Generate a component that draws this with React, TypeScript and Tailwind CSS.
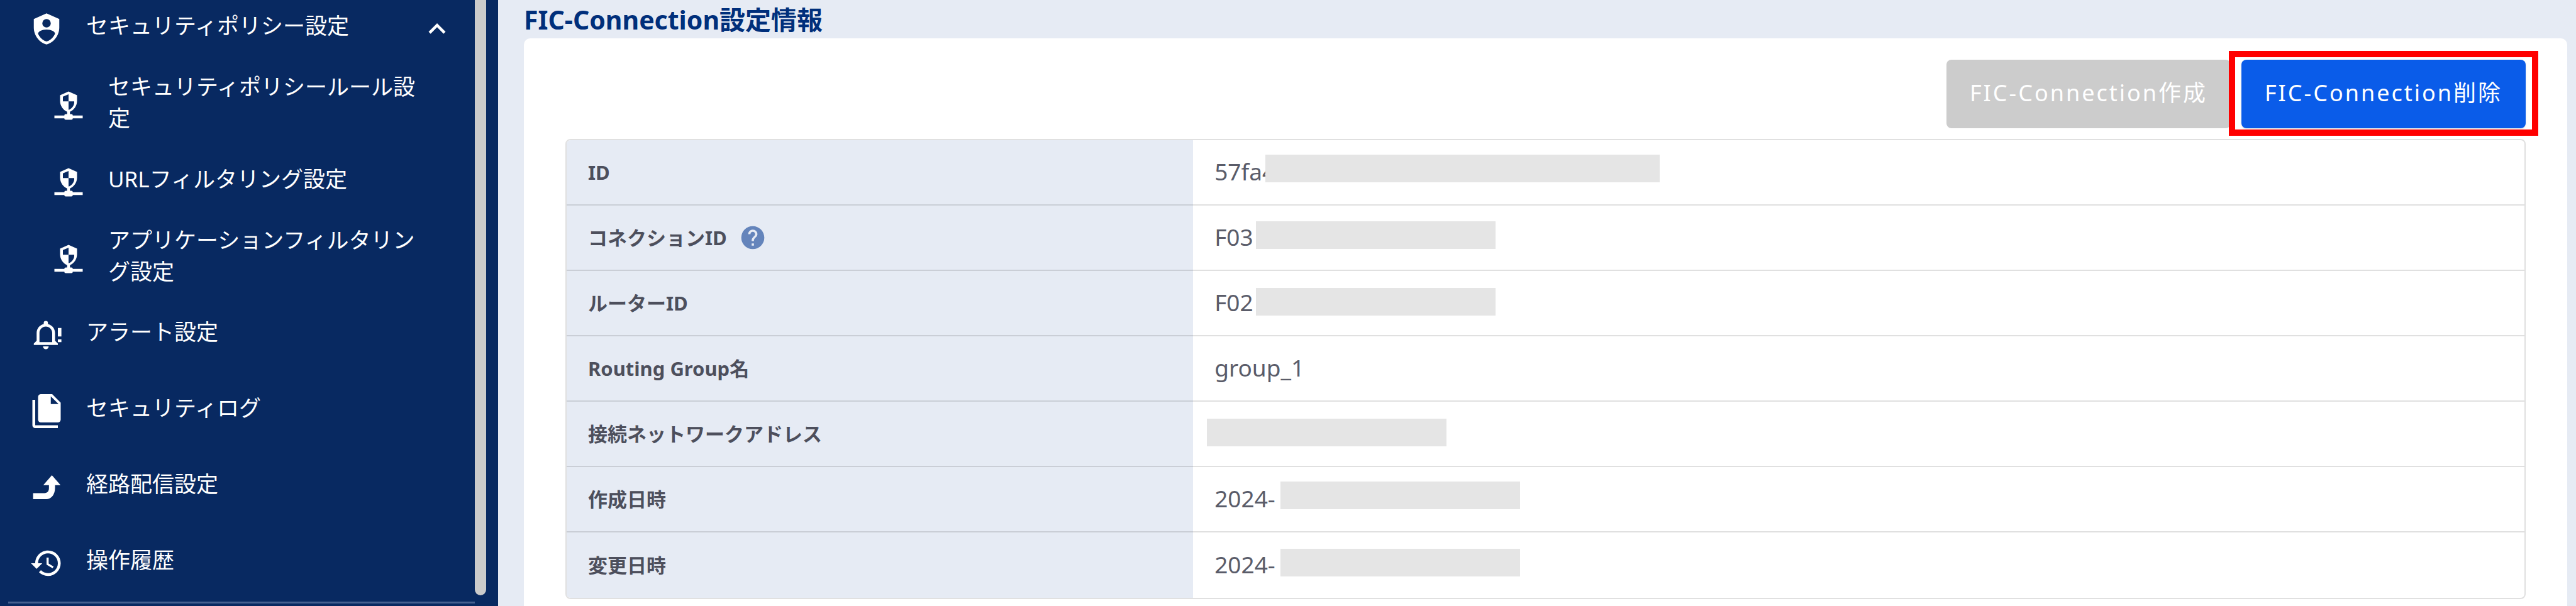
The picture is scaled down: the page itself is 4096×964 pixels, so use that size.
import React from 'react'
import { useState } from 'react'

const icons = {
    shieldAccount:
        'M12,1L3,5V11C3,16.55 6.84,21.74 12,23C17.16,21.74 21,16.55 21,11V5M12,5A3,3 0 0,1 15,8A3,3 0 0,1 12,11A3,3 0 0,1 9,8A3,3 0 0,1 12,5M17.13,17C15.92,18.85 14.11,20.24 12,20.92C9.89,20.24 8.08,18.85 6.87,17C6.53,16.5 6.24,16 6,15.47C6,13.82 8.71,12.47 12,12.47C15.29,12.47 18,13.79 18,15.47C17.76,16 17.47,16.5 17.13,17Z',
    securityNetwork:
        'M13,18H14A1,1 0 0,1 15,19H22V21H15A1,1 0 0,1 14,22H10A1,1 0 0,1 9,21H2V19H9A1,1 0 0,1 10,18H11V16.34C8.07,15.13 6,12 6,8.67V4.67L12,2L18,4.67V8.67C18,12 15.93,15.13 13,16.34V18M12,4L8,5.69V9H12V4M12,9V15C13.91,14.53 16,12.06 16,10V9H12Z',
    bellAlert:
        'M16,17H7V10.5C7,8 9,6 11.5,6C14,6 16,8 16,10.5M18,16V10.5C18,7.43 15.86,4.86 13,4.18V3.5A1.5,1.5 0 0,0 11.5,2A1.5,1.5 0 0,0 10,3.5V4.18C7.13,4.86 5,7.43 5,10.5V16L3,18V19H20V18M11.5,22A2,2 0 0,0 13.5,20H9.5A2,2 0 0,0 11.5,22M20,7H22.5V13H20ZM20,15H22.5V17H20Z',
    fileMultiple:
        'M15,7H20.5L15,1.5V7M8,0H16L22,6V18A2,2 0 0,1 20,20H8C6.89,20 6,19.1 6,18V2A2,2 0 0,1 8,0M4,4V22H20V24H4A2,2 0 0,1 2,22V4H4Z',
    route: 'M15.8,3.5L21.9,10.6H18V12.5C18,17 15.5,20.4 11.8,20.4H2.5V16.2H10.5C12.6,16.2 13.7,15 13.7,12.6V10.6H9.7Z',
    history:
        'M13,3C8.03,3 4,7.03 4,12H1L4.89,15.89L4.96,16.03L9,12H6C6,8.13 9.13,5 13,5C16.87,5 20,8.13 20,12C20,15.87 16.87,19 13,19C11.07,19 9.32,18.21 8.06,16.94L6.64,18.36C8.27,20 10.5,21 13,21A9,9 0 0,0 22,12A9,9 0 0,0 13,3M12,8V13L16.28,15.54L17,14.33L13.5,12.25V8H12Z',
    chevronUp: 'M7.41,15.41L12,10.83L16.59,15.41L18,14L12,8L6,14L7.41,15.41Z',
    help: 'M15.07,11.25L14.17,12.17C13.45,12.89 13,13.5 13,15H11V14.5C11,13.39 11.45,12.39 12.17,11.67L13.41,10.41C13.78,10.05 14,9.55 14,9C14,7.89 13.1,7 12,7A2,2 0 0,0 10,9H8A4,4 0 0,1 12,5A4,4 0 0,1 16,9C16,9.88 15.64,10.67 15.07,11.25M13,19H11V17H13M12,2A10,10 0 0,0 2,12A10,10 0 0,0 12,22A10,10 0 0,0 22,12C22,6.47 17.5,2 12,2Z',
}

function Icon({ path, className }: { path: string; className: string }) {
    return (
        <svg viewBox="0 0 24 24" fill="currentColor" fillRule="evenodd" className={className} aria-hidden="true">
            <path d={path} />
        </svg>
    )
}

const subItems = ['セキュリティポリシールール設定', 'URLフィルタリング設定', 'アプリケーションフィルタリング設定']

const mainItems = [
    { label: 'アラート設定', icon: icons.bellAlert },
    { label: 'セキュリティログ', icon: icons.fileMultiple },
    { label: '経路配信設定', icon: icons.route },
    { label: '操作履歴', icon: icons.history },
]

// mask: 伏せ字ブロックの幅と位置
const rows = [
    { label: 'ID', value: '57fa4', mask: '-ml-4 mb-2 w-[627px]' },
    { label: 'コネクションID', value: 'F03', mask: 'ml-1 mb-1 w-[381px]', help: true },
    { label: 'ルーターID', value: 'F02', mask: 'ml-1 w-[381px]' },
    { label: 'Routing Group名', value: 'group_1' },
    { label: '接続ネットワークアドレス', value: '', mask: '-ml-3 w-[381px]' },
    { label: '作成日時', value: '2024-', mask: 'ml-2 mb-2 w-[381px]' },
    { label: '変更日時', value: '2024-', mask: 'ml-2 mb-1 w-[381px]' },
]

function Sidebar() {
    const [open, setOpen] = useState<boolean>(true)

    return (
        <aside className="flex w-[792px] shrink-0 bg-[#082961] text-[35px] leading-[50px] text-white">
            <nav className="flex flex-1 flex-col">
                <button
                    type="button"
                    aria-expanded={open}
                    onClick={() => setOpen(!open)}
                    className="flex h-[101px] items-center pb-[10px] pl-[47px] pr-[33px] text-left"
                >
                    <Icon path={icons.shieldAccount} className="size-[54px] shrink-0" />
                    <span className="ml-9 flex-1 pb-[10px]">セキュリティポリシー設定</span>
                    <Icon path={icons.chevronUp} className="size-[54px] shrink-0" />
                </button>

                {open &&
                    subItems.map((label) => (
                        <a key={label} href="#" className="flex h-[122px] items-center pl-[82px] pr-[80px] pt-[12px]">
                            <Icon path={icons.securityNetwork} className="size-[54px] shrink-0" />
                            <span className="ml-9 flex-1 pb-[10px]">{label}</span>
                        </a>
                    ))}

                {mainItems.map((item) => (
                    <a key={item.label} href="#" className="flex h-[121px] items-center pl-[47px] pt-[10px]">
                        <Icon path={item.icon} className="size-[54px] shrink-0" />
                        <span className="ml-9 pb-[10px]">{item.label}</span>
                    </a>
                ))}
                <hr className="ml-[13px] mt-1.5 border-t-3 border-[#45608f]" />
            </nav>

            {/* スクロールバー */}
            <div className="mb-[17px] mr-[19px] w-[18px] rounded-b-full bg-[#cbcbcb]"></div>
        </aside>
    )
}

export default function App() {
    return (
        <div className="flex min-h-screen overflow-hidden bg-[#e6ebf4] font-['Noto_Sans','Noto_Sans_CJK_JP',sans-serif]">
            <Sidebar />

            <main className="flex flex-1 flex-col pl-[41px] pr-[14px]">
                <h2 className="flex h-[61px] items-center text-[41px] font-bold leading-[60px] text-[#002f7b]">
                    FIC-Connection設定情報
                </h2>

                <section className="flex-1 rounded-t-[10px] bg-white px-[66px] pt-[34px]">
                    <div className="flex justify-end gap-[17px] text-[36px] leading-[49px] tracking-[3px] text-white">
                        <button type="button" disabled className="h-[109px] w-[452px] rounded-lg bg-[#cccccc] pb-1">
                            FIC-Connection作成
                        </button>
                        <div className="relative">
                            <button
                                type="button"
                                className="h-[109px] w-[452px] rounded-lg bg-[#0a5ce9] pb-1 tracking-[3px] shadow-sm"
                            >
                                FIC-Connection削除
                            </button>
                            {/* 強調枠 */}
                            <div className="pointer-events-none absolute -bottom-3 -left-5 -right-5 -top-3.5 border-10 border-[#ff0000]"></div>
                        </div>
                    </div>

                    <div className="mt-[17px] overflow-hidden rounded-lg border-2 border-black/12">
                        <table className="w-full border-separate border-spacing-0 text-left">
                            <tbody>
                                {rows.map((row) => (
                                    <tr key={row.label} className="group">
                                        <th
                                            scope="row"
                                            className="h-[104px] w-[32%] border-b-2 border-black/12 bg-[#e6ebf4] px-[34px] text-[31px] font-bold leading-[44px] text-[#4d4f5c] group-last:border-b-0"
                                        >
                                            <span className="flex items-center">
                                                {row.label}
                                                {row.help && (
                                                    <button type="button" aria-label="ヘルプ" className="ml-[19px]">
                                                        <Icon path={icons.help} className="size-[44px] text-[#6484bb]" />
                                                    </button>
                                                )}
                                            </span>
                                        </th>
                                        <td className="h-[104px] border-b-2 border-black/12 px-[34px] text-[37px] leading-[49px] text-[#5a5c69] group-last:border-b-0">
                                            <div className="flex items-center pb-1">
                                                <span>{row.value}</span>
                                                {row.mask && <span className={`${row.mask} h-[44px] bg-[#e5e5e5]`}></span>}
                                            </div>
                                        </td>
                                    </tr>
                                ))}
                            </tbody>
                        </table>
                    </div>
                </section>
            </main>
        </div>
    )
}
